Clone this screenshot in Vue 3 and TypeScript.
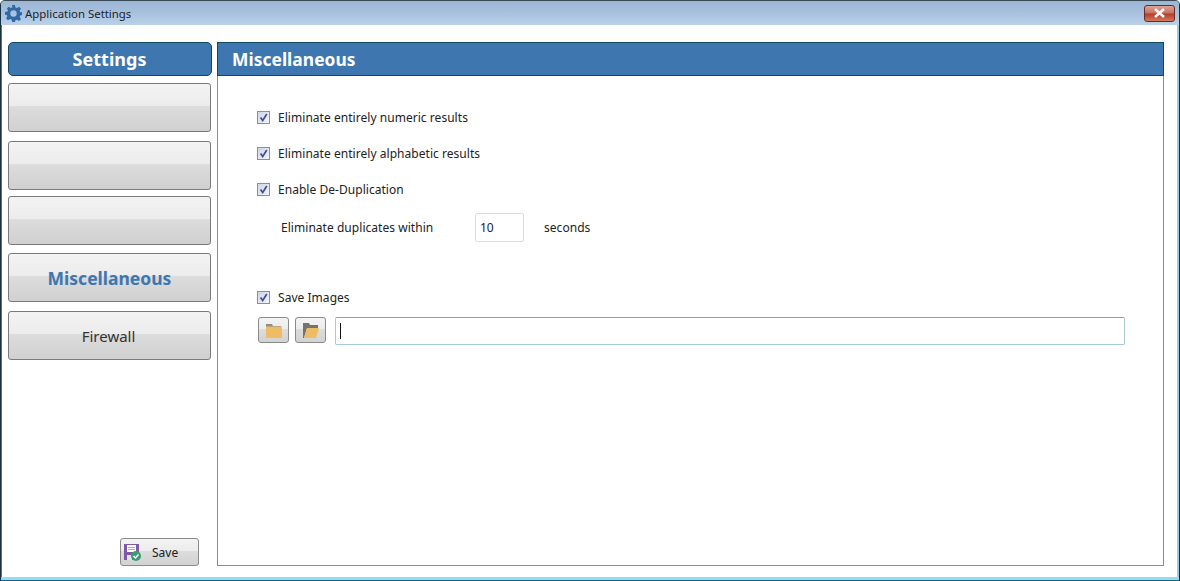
<script setup lang="ts">
interface NavItem { label: string; cls: string }
const nav: NavItem[] = [
  { label: '', cls: 'g9' },
  { label: '', cls: 'g6' },
  { label: '', cls: 'g8' },
  { label: 'Miscellaneous', cls: 'g9 active' },
  { label: 'Firewall', cls: '' },
]
const checks: string[] = ['Eliminate entirely numeric results', 'Eliminate entirely alphabetic results', 'Enable De-Duplication']
</script>

<template>
  <div class="window">
    <div class="titlebar">
      <svg class="gear" width="17" height="17" viewBox="0 0 24 24">
        <path fill="#2f6aa6" fill-rule="evenodd" d="M10 0h4l.7 3.4 2.2.9L19.800 2.400 22.600 5.200 20.700 8.100l.9 2.200L24 10v4l-2.400.7-.9 2.200 1.900 2.900-2.800 2.800-2.900-1.900-2.200.9L14 24h-4l-.7-3.400-2.200-.9-2.900 1.900-2.800-2.800 1.900-2.900-.9-2.200L0 14v-4l3.400-.7.900-2.200L2.400 5.200 5.200 2.400l2.900 1.900 2.200-.9zM12 7.500a4.500 4.500 0 1 0 0 9 4.500 4.500 0 0 0 0-9z"/>
      </svg>
      <span class="title">Application Settings</span>
      <button class="close">
        <svg width="13" height="10" viewBox="0 0 13 10"><path d="M2 1l9 8M11 1l-9 8" stroke="#f4f4f4" stroke-width="2.600" fill="none"/></svg>
      </button>
    </div>
    <div class="body">
      <aside class="side">
        <div class="side-head">Settings</div>
        <button v-for="(n, i) in nav" :key="i" class="nav" :class="n.cls">{{ n.label }}</button>
        <button class="save">
          <svg width="17" height="17" viewBox="0 0 17 17">
            <path fill="#7d5aa6" d="M0 0h15v16H0z"/>
            <path fill="#fff" d="M3 1h9v7H3z"/>
            <path fill="#b9a5c9" d="M4 3h7v1H4zM4 5h7v1H4z"/>
            <path fill="#dfe3ea" d="M3 11h5v5H3z"/>
            <circle cx="12" cy="12" r="5" fill="#3c9a74"/>
            <path d="M9.500 12l2 2 3-3.500" stroke="#fff" stroke-width="1.500" fill="none"/>
          </svg>
          <span>Save</span>
        </button>
      </aside>
      <main class="panel">
        <div class="panel-head">Miscellaneous</div>
        <div class="content">
          <label v-for="c in checks" :key="c" class="check">
            <span class="box"><svg width="9" height="9" viewBox="0 0 9 9"><path d="M1.500 4.500L3.700 7.500 7.800 1" stroke="#3a4f9a" stroke-width="1.700" fill="none"/></svg></span>
            <span class="lbl">{{ c }}</span>
          </label>
          <div class="dedupe">
            <span class="within">Eliminate duplicates within</span>
            <input class="num" value="10" />
            <span>seconds</span>
          </div>
          <label class="check images">
            <span class="box"><svg width="9" height="9" viewBox="0 0 9 9"><path d="M1.500 4.500L3.700 7.500 7.800 1" stroke="#3a4f9a" stroke-width="1.700" fill="none"/></svg></span>
            <span class="lbl">Save Images</span>
          </label>
          <div class="path-row">
            <button class="folder">
              <svg width="16" height="15" viewBox="0 0 16 15"><path fill="#8f8f8a" d="M0 1h6l1 2h8v2H0z"/><path fill="#efbc66" d="M0 3.500h16V15H0z"/></svg>
            </button>
            <button class="folder">
              <svg width="16" height="15" viewBox="0 0 16 15"><path fill="#77736c" d="M0 0h6l1 2h8v3H4L1 15H0z"/><path fill="#efbc66" d="M4 5h12l-3 10H1z"/></svg>
            </button>
            <div class="path"><i class="caret"></i></div>
          </div>
        </div>
      </main>
    </div>
  </div>
</template>

<style>
html, body { margin: 0; background: #fff; }
</style>

<style scoped>
.window {
  width: 1180px;
  height: 581px;
  box-sizing: border-box;
  background: #fff;
  border: 1px solid #16303f;
  border-top-color: #3b4a55;
  border-bottom-color: #1e5f88;
  border-radius: 5px 5px 0 0;
  font-family: "Noto Sans", "Open Sans", sans-serif;
  font-size: 12px;
  letter-spacing: 0.04px;
  color: #222;
  display: flex;
  flex-direction: column;
  overflow: hidden;
  box-shadow: inset 0 -3px 0 #8fdff0, inset 1px 0 0 #3f78a8, inset -2px 0 0 #8fcfe4;
}
.titlebar {
  height: 24px;
  flex: none;
  display: flex;
  align-items: center;
  padding: 0 4px 0 4px;
  background: linear-gradient(180deg, #9cb6d5 0%, #a6bfdc 45%, #bad1e9 100%);
}
.gear { flex: none; }
.title { margin-left: 3px; font-size: 11.400px; letter-spacing: 0; color: #1a242c; }
.close {
  margin: 0 0 0 auto;
  width: 31px;
  height: 17px;
  padding: 0;
  display: flex;
  align-items: center;
  justify-content: center;
  border: 1px solid #6b2a2a;
  border-radius: 3px;
  background: linear-gradient(180deg, #dba596 0%, #c9705f 48%, #b33a2a 52%, #d27a5c 100%);
}
.body {
  flex: 1;
  display: flex;
  gap: 5px;
  padding: 17px 15px 14px 7px;
  min-height: 0;
}
.side {
  width: 204px;
  flex: none;
  display: flex;
  flex-direction: column;
}
.side-head {
  height: 34px;
  box-sizing: border-box;
  border: 1px solid #0c4a5c;
  border-radius: 5px;
  background: #3e76b0;
  color: #fff;
  font-size: 18px;
  font-weight: 700;
  line-height: 32px;
  text-align: center;
  padding-right: 1px;
  margin-bottom: 7px;
}
.nav {
  height: 49px;
  flex: none;
  margin: 0;
  padding: 0 2px 0 0;
  width: 203px;
  box-sizing: border-box;
  border: 1px solid #7a7a7a;
  border-radius: 3px;
  background: linear-gradient(180deg, #f3f3f3 0%, #ececec 47%, #dcdcdc 48%, #d0d0d0 100%);
  font: inherit;
  font-size: 15px;
  color: #333;
}
.g9 { margin-bottom: 9px; }
.g6 { margin-bottom: 6px; }
.g8 { margin-bottom: 8px; }
.active {
  color: #3e76b0;
  font-size: 17.500px;
  font-weight: 700;
  padding: 0;
}
.save {
  margin: auto 13px 0 auto;
  width: 79px;
  height: 28px;
  box-sizing: border-box;
  padding: 0 0 0 3px;
  display: flex;
  align-items: center;
  border: 1px solid #8a8a8a;
  border-radius: 3px;
  background: linear-gradient(180deg, #f3f3f3 0%, #ececec 47%, #dcdcdc 48%, #d2d2d2 100%);
  font: inherit;
  color: #222;
}
.save span { margin-left: 11px; }
.panel {
  flex: 1;
  min-width: 0;
  box-sizing: border-box;
  border: 1px solid #8c8c8c;
  border-top: 0;
  display: flex;
  flex-direction: column;
}
.panel-head {
  height: 34px;
  box-sizing: border-box;
  margin: 0 -1px;
  border: 1px solid #0c4a5c;
  background: #3e76b0;
  color: #fff;
  font-size: 17.400px;
  font-weight: 700;
  line-height: 32px;
  padding-left: 14px;
}
.content {
  padding: 34px 38px 0 39px;
  display: flex;
  flex-direction: column;
}
.check {
  height: 14px;
  line-height: 14px;
  display: flex;
  align-items: center;
  gap: 8px;
  margin-bottom: 22px;
}
.lbl { position: relative; top: 1px; }
.box {
  width: 13px;
  height: 13px;
  box-sizing: border-box;
  border: 1px solid #8e8f8f;
  background: linear-gradient(135deg, #cfd5e2, #f4f5f8);
  display: flex;
  align-items: center;
  justify-content: center;
}
.dedupe {
  display: flex;
  align-items: center;
  height: 30px;
  margin: -6px 0 0 24px;
}
.within { width: 194px; }
.num {
  width: 49px;
  height: 29px;
  box-sizing: border-box;
  border: 1px solid #dcdcdc;
  border-radius: 2px;
  padding: 0 0 0 4px;
  margin-right: 20px;
  font: inherit;
  color: #222;
  outline: none;
}
.images { margin: 48px 0 13px; }
.path-row {
  display: flex;
  align-items: flex-start;
  gap: 6px;
  padding-left: 1px;
}
.folder {
  width: 31px;
  height: 26px;
  padding: 0;
  box-sizing: border-box;
  border: 1px solid #8a8a8a;
  border-radius: 3px;
  background: linear-gradient(180deg, #f3f3f3 0%, #ececec 47%, #dcdcdc 48%, #d2d2d2 100%);
  display: flex;
  align-items: center;
  justify-content: center;
}
.path {
  flex: 1;
  height: 28px;
  margin-left: 3px;
  box-sizing: border-box;
  border: 1px solid #a8c9d6;
  border-top-color: #7fa5b8;
  border-radius: 2px;
  display: flex;
  align-items: center;
  padding-left: 4px;
}
.caret {
  width: 1px;
  height: 16px;
  background: #111;
}
</style>
